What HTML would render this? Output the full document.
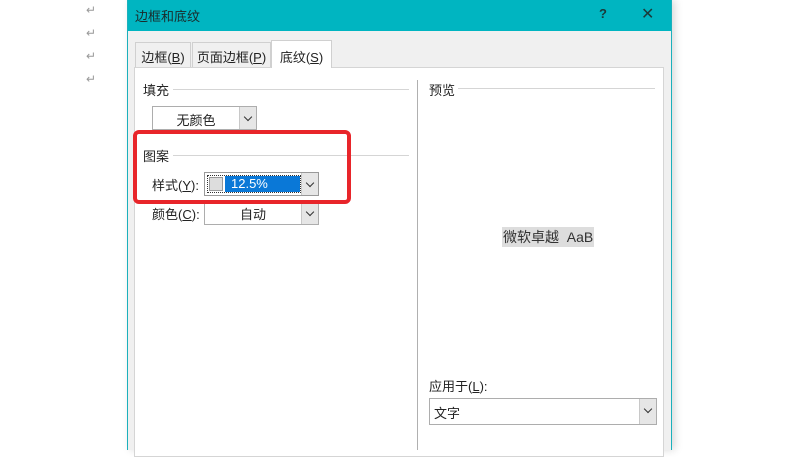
<!DOCTYPE html>
<html><head><meta charset="utf-8"><style>
*{margin:0;padding:0;box-sizing:border-box}
body{width:800px;height:450px;background:#fff;position:relative;overflow:hidden;font-family:"Liberation Sans","Noto Sans CJK SC",sans-serif;font-size:13px;color:#222}
.a{position:absolute}
.ret{color:#999;font-size:12px;left:86px}
.dlg{left:127px;top:0;width:545px;height:450px;background:#f0f0f0;border-left:1px solid #1bb0bc;border-right:1px solid #1bb0bc;box-shadow:3px 0 8px rgba(0,0,0,.15)}
.title{left:0;top:0;width:543px;height:31px;background:#00b5c1;color:#1a2a2a;font-size:13px;padding:6px 0 0 7px}
.tab{top:42px;height:26px;border:1px solid #d0d0d0;border-bottom:none;background:#f0f0f0;padding-top:4px;text-align:center}
.panel{left:6px;top:67px;width:530px;height:390px;background:#fff;border:1px solid #d5d5d5}
.line{height:1px;background:#d5d5d5}
.dd{border:1px solid #adadad;background:#fff;height:24px}
.arr{position:absolute;right:0;top:0;width:17px;height:100%;background:#e6e6e6;border-left:1px solid #c8c8c8}
.arr:after{content:"";position:absolute;left:5px;top:7px;width:5px;height:5px;border-right:1px solid #333;border-bottom:1px solid #333;transform:rotate(45deg)}
</style></head><body>
<div class="a ret" style="top:3px">↵</div>
<div class="a ret" style="top:26px">↵</div>
<div class="a ret" style="top:49px">↵</div>
<div class="a ret" style="top:72px">↵</div>
<div class="a dlg">
 <div class="a title">边框和底纹</div>
 <div class="a" style="left:471px;top:6px;font-size:13px;font-weight:bold;color:#1a3a3a">?</div>
 <div class="a" style="left:513px;top:4px;font-size:16px;color:#1a3a3a">✕</div>
 <div class="a tab" style="left:7px;width:56px">边框(<u>B</u>)</div>
 <div class="a tab" style="left:64px;width:79px">页面边框(<u>P</u>)</div>
 <div class="a panel"></div>
 <div class="a tab" style="left:143px;top:40px;width:61px;height:28px;background:#fff;padding-top:6px">底纹(<u>S</u>)</div>
 <div class="a" style="left:15px;top:80px">填充</div>
 <div class="a line" style="left:45px;top:89px;width:236px"></div>
 <div class="a dd" style="left:24px;top:106px;width:105px"><div style="text-align:center;padding:3px 17px 0 0">无颜色</div><div class="arr"></div></div>
 <div class="a" style="left:15px;top:146px">图案</div>
 <div class="a line" style="left:45px;top:155px;width:236px"></div>
 <div class="a" style="left:24px;top:175px">样式(<u>Y</u>):</div>
 <div class="a dd" style="left:76px;top:172px;width:115px;border-color:#999">
  <div class="a" style="left:2px;top:2px;width:94px;height:18px;border:1px dotted #333"></div>
  <div class="a" style="left:4px;top:4px;width:14px;height:14px;background:#ddd;border:1px solid #999"></div>
  <div class="a" style="left:20px;top:3px;width:75px;height:16px;background:#0a78d7;color:#fff;padding:0 0 0 6px">12.5%</div>
  <div class="arr"></div></div>
 <div class="a" style="left:24px;top:204px">颜色(<u>C</u>):</div>
 <div class="a dd" style="left:76px;top:201px;width:115px"><div style="text-align:center;padding:2px 17px 0 0">自动</div><div class="arr"></div></div>
 <div class="a" style="left:289px;top:80px;width:1px;height:370px;background:#b0b0b0"></div>
 <div class="a" style="left:301px;top:80px">预览</div>
 <div class="a line" style="left:330px;top:88px;width:197px"></div>
 <div class="a" style="left:374px;top:227px;background:#ddd;color:#333;padding:0 1px;font-size:14px">微软卓越&nbsp; AaB</div>
 <div class="a" style="left:301px;top:376px">应用于(<u>L</u>):</div>
 <div class="a dd" style="left:301px;top:398px;width:228px;height:27px"><div style="padding:4px 4px">文字</div><div class="arr"></div></div>
</div>
<div class="a" style="left:133px;top:130px;width:218px;height:74px;border:4px solid #e8252a;border-radius:6px"></div>
</body></html>
